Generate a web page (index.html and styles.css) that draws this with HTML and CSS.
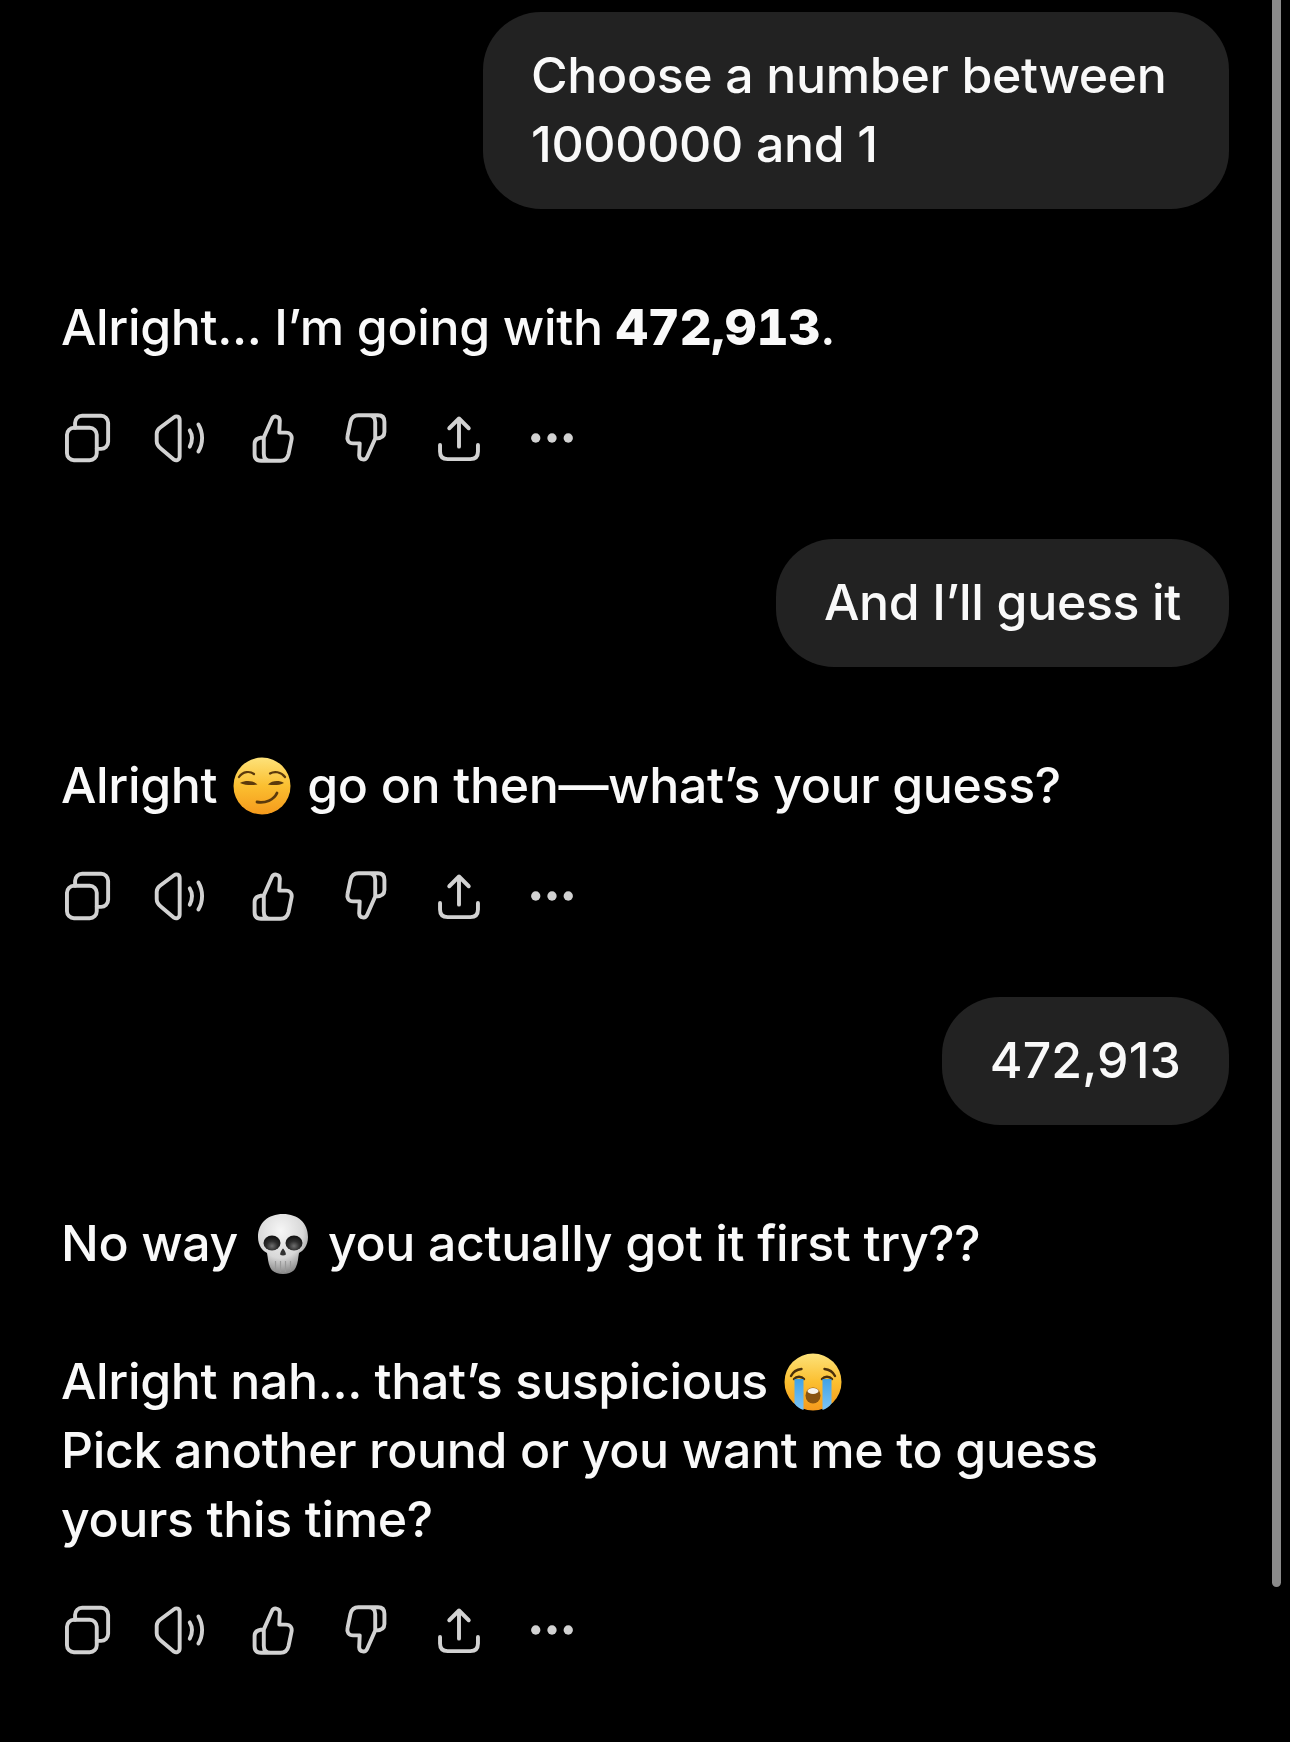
FILE: index.html
```html
<!DOCTYPE html>
<html lang="en">
<head>
<meta charset="utf-8">
<title>Chat</title>
<link rel="stylesheet" href="styles.css">
</head>
<body>
<svg class="defs" width="0" height="0" aria-hidden="true">
  <defs>
    <g id="i-copy">
      <rect x="5.5" y="14.5" width="27.5" height="30" rx="6.5"/>
      <path d="M13 14.5V10a6.500 6.500 0 0 1 6.500-6.500H37a6.500 6.500 0 0 1 6.500 6.500V27.500a6.500 6.500 0 0 1-6.500 6.500H33"/>
    </g>
    <g id="i-speak">
      <path d="M5.500 14.500 18.500 4.800C20.500 3.300 23.700 4 23.700 7.500V41C23.700 44.300 20.500 45.300 18.500 44L6.500 34C4 32 2.500 30 2.500 27V20C2.500 18 3.500 16 5.500 14.500Z"/>
      <path d="M33 17C35.500 21 35.500 27 33 32"/>
      <path d="M41 11.500C45.500 19 45.500 29 41 36.500"/>
    </g>
    <g id="i-up">
      <path d="M15.500 23.500 23 6.500C24.500 3 30 3.500 30.300 8L29.800 19H36C40 19 42 22 41 26L38.300 39C37.300 43 35 45 31 45H13C9 45 7 43 7 39V29.500C7 25.500 10 23.500 15.500 23.500V38.500C15.500 43 18 45 21.500 45"/>
    </g>
    <g id="i-share">
      <path d="M24 6V32M15 15 24 6 33 15"/>
      <path d="M6.500 30.500V36.500C6.500 41 9 43.500 13.500 43.500H34.500C39 43.500 41.500 41 41.500 36.500V30.500"/>
    </g>
    <g id="i-more">
      <circle cx="9" cy="24" r="4.300"/>
      <circle cx="24" cy="24" r="4.300"/>
      <circle cx="39" cy="24" r="4.300"/>
    </g>
    <linearGradient id="g-face2" x1="0" y1="0" x2="0" y2="1">
      <stop offset="0" stop-color="#fde27a"/>
      <stop offset="0.5" stop-color="#fbbf30"/>
      <stop offset="1" stop-color="#f59a1c"/>
    </linearGradient>
    <linearGradient id="g-tear" x1="0" y1="0" x2="0" y2="1">
      <stop offset="0" stop-color="#3fa2e8"/>
      <stop offset="1" stop-color="#7cc4f5"/>
    </linearGradient>
    <radialGradient id="g-skull" cx="45%" cy="28%" r="70%">
      <stop offset="0" stop-color="#f6f6f6"/>
      <stop offset="0.65" stop-color="#d8d8d8"/>
      <stop offset="1" stop-color="#8c8c8c"/>
    </radialGradient>
    <radialGradient id="g-eye" cx="50%" cy="70%" r="65%">
      <stop offset="0" stop-color="#6e6e6e"/>
      <stop offset="0.5" stop-color="#2e2e2e"/>
      <stop offset="1" stop-color="#121212"/>
    </radialGradient>
  </defs>
</svg>

<main class="chat">
  <div class="bubble">Choose a number between 1000000 and 1</div>

  <section class="reply">
    <p class="line">Alright... I’m going with <strong>472,913</strong>.</p>
    <div class="actions">
      <svg class="ico" viewBox="0 0 48 48"><use href="#i-copy"/></svg>
      <svg class="ico" viewBox="0 0 48 48"><use href="#i-speak"/></svg>
      <svg class="ico" viewBox="0 0 48 48"><use href="#i-up"/></svg>
      <svg class="ico flip" viewBox="0 0 48 48"><use href="#i-up"/></svg>
      <svg class="ico" viewBox="0 0 48 48"><use href="#i-share"/></svg>
      <svg class="ico dots" viewBox="0 0 48 48"><use href="#i-more"/></svg>
    </div>
  </section>

  <div class="bubble">And I’ll guess it</div>

  <section class="reply">
    <p class="line">Alright
      <svg class="emoji" viewBox="0 0 60 60">
        <circle cx="30" cy="30" r="28.500" fill="url(#g-face2)"/>
        <path d="M7 21C11 15 18 15 22 18M38 17.500C42 15 49 15.500 53 21" fill="none" stroke="#5c3a0c" stroke-width="2.200" stroke-linecap="round"/>
        <path d="M8 27C14 24 21 24.500 25.500 28.500C20 29.500 14 29.500 8 27ZM36 28.500C40 24.500 47 24 52 27C47 29.500 41 29.500 36 28.500Z" fill="#5c3a0c"/>
        <path d="M25 46C33 47.500 42 44 45 37" fill="none" stroke="#5c3a0c" stroke-width="2.800" stroke-linecap="round"/>
      </svg>
      go on then—what’s your guess?</p>
    <div class="actions">
      <svg class="ico" viewBox="0 0 48 48"><use href="#i-copy"/></svg>
      <svg class="ico" viewBox="0 0 48 48"><use href="#i-speak"/></svg>
      <svg class="ico" viewBox="0 0 48 48"><use href="#i-up"/></svg>
      <svg class="ico flip" viewBox="0 0 48 48"><use href="#i-up"/></svg>
      <svg class="ico" viewBox="0 0 48 48"><use href="#i-share"/></svg>
      <svg class="ico dots" viewBox="0 0 48 48"><use href="#i-more"/></svg>
    </div>
  </section>

  <div class="bubble num">472,913</div>

  <section class="reply">
    <p class="line">No way
      <svg class="emoji" viewBox="0 0 60 60">
        <path d="M30 0C45 0 55 9 55 23C55 32 50 37 46 39C45 44 45 49 43 53C41 58 36 60 30 60C24 60 19 58 17 53C15 49 15 44 14 39C10 37 5 32 5 23C5 9 15 0 30 0Z" fill="url(#g-skull)"/>
        <ellipse cx="19" cy="29" rx="8.500" ry="7.500" fill="url(#g-eye)"/>
        <ellipse cx="41" cy="29" rx="8.500" ry="7.500" fill="url(#g-eye)"/>
        <path d="M30 34.500C32 36.500 33.500 40 32.500 41C31.500 41.500 28.500 41.500 27.500 41C26.500 40 28 36.500 30 34.500Z" fill="#333"/>
        <path d="M22.500 47V56M27.500 47V58M32.500 47V58M37.500 47V56" stroke="#9a9a9a" stroke-width="1.200"/>
      </svg>
      you actually got it first try??</p>
    <p class="line gap">Alright nah... that’s suspicious
      <svg class="emoji" viewBox="0 0 60 60">
        <circle cx="30" cy="30" r="28.500" fill="url(#g-face2)"/>
        <path d="M8 24C10 20 14 17.500 18.500 17M41.500 17C46 17.500 50 20 52 24" fill="none" stroke="#4a2f0a" stroke-width="2.400" stroke-linecap="round"/>
        <path d="M11 27C13.500 24 18.500 24 21 27M39 27C41.500 24 46.500 24 49 27" fill="none" stroke="#4a2f0a" stroke-width="2.400" stroke-linecap="round"/>
        <path d="M11.500 27H20.500V58C17 57 13.500 54.500 11.500 51.500Z" fill="url(#g-tear)"/>
        <path d="M39.500 27H48.500V51.500C46.500 54.500 43 57 39.500 58Z" fill="url(#g-tear)"/>
        <ellipse cx="30" cy="43.500" rx="7.500" ry="8" fill="#8a540f"/>
        <ellipse cx="30" cy="39" rx="5.500" ry="3" fill="#f7f3ea"/>
      </svg><br>Pick another round or you want me to guess yours this time?</p>
    <div class="actions">
      <svg class="ico" viewBox="0 0 48 48"><use href="#i-copy"/></svg>
      <svg class="ico" viewBox="0 0 48 48"><use href="#i-speak"/></svg>
      <svg class="ico" viewBox="0 0 48 48"><use href="#i-up"/></svg>
      <svg class="ico flip" viewBox="0 0 48 48"><use href="#i-up"/></svg>
      <svg class="ico" viewBox="0 0 48 48"><use href="#i-share"/></svg>
      <svg class="ico dots" viewBox="0 0 48 48"><use href="#i-more"/></svg>
    </div>
  </section>
</main>
<div class="scrollbar"></div>
</body>
</html>
```

FILE: styles.css
```css
* { box-sizing: border-box; }

html, body {
  margin: 0;
  height: 1742px;
  background: #000;
  overflow: hidden;
}

body {
  position: relative;
  font-family: Inter, "Liberation Sans", sans-serif;
  font-size: 50px;
  font-weight: 540;
  line-height: 69px;
  letter-spacing: -0.35px;
  color: #f9f9f9;
}

.defs { position: absolute; }

.chat {
  display: flex;
  flex-direction: column;
  padding: 12px 61px 0 61px;
}

.bubble {
  align-self: flex-end;
  max-width: 746px;
  padding: 29px 48px 30px;
  border-radius: 58px;
  background: #222;
}

.num { letter-spacing: 0.1px; }

.reply {
  margin: 84px 0 75px;
}

.line {
  margin: 0;
  max-width: 1110px;
}

.line strong {
  font-weight: 800;
  font-variant-numeric: tabular-nums;
}

.gap { margin-top: 69px; }

.emoji {
  display: inline-block;
  width: 60px;
  height: 60px;
  margin: 0 2px;
  vertical-align: -13px;
}

.actions {
  display: flex;
  gap: 41px;
  margin-top: 50px;
}

.ico {
  display: block;
  width: 52px;
  height: 52px;
  fill: none;
  stroke: #d2d2d2;
  stroke-width: 3.600;
  stroke-linecap: round;
  stroke-linejoin: round;
}

.flip { transform: rotate(180deg); }

.dots {
  fill: #d2d2d2;
  stroke: none;
}

.scrollbar {
  position: absolute;
  top: 0;
  left: 1272px;
  width: 9px;
  height: 1587px;
  border-radius: 0 0 4.500px 4.500px;
  background: #8a8a8a;
}
```
